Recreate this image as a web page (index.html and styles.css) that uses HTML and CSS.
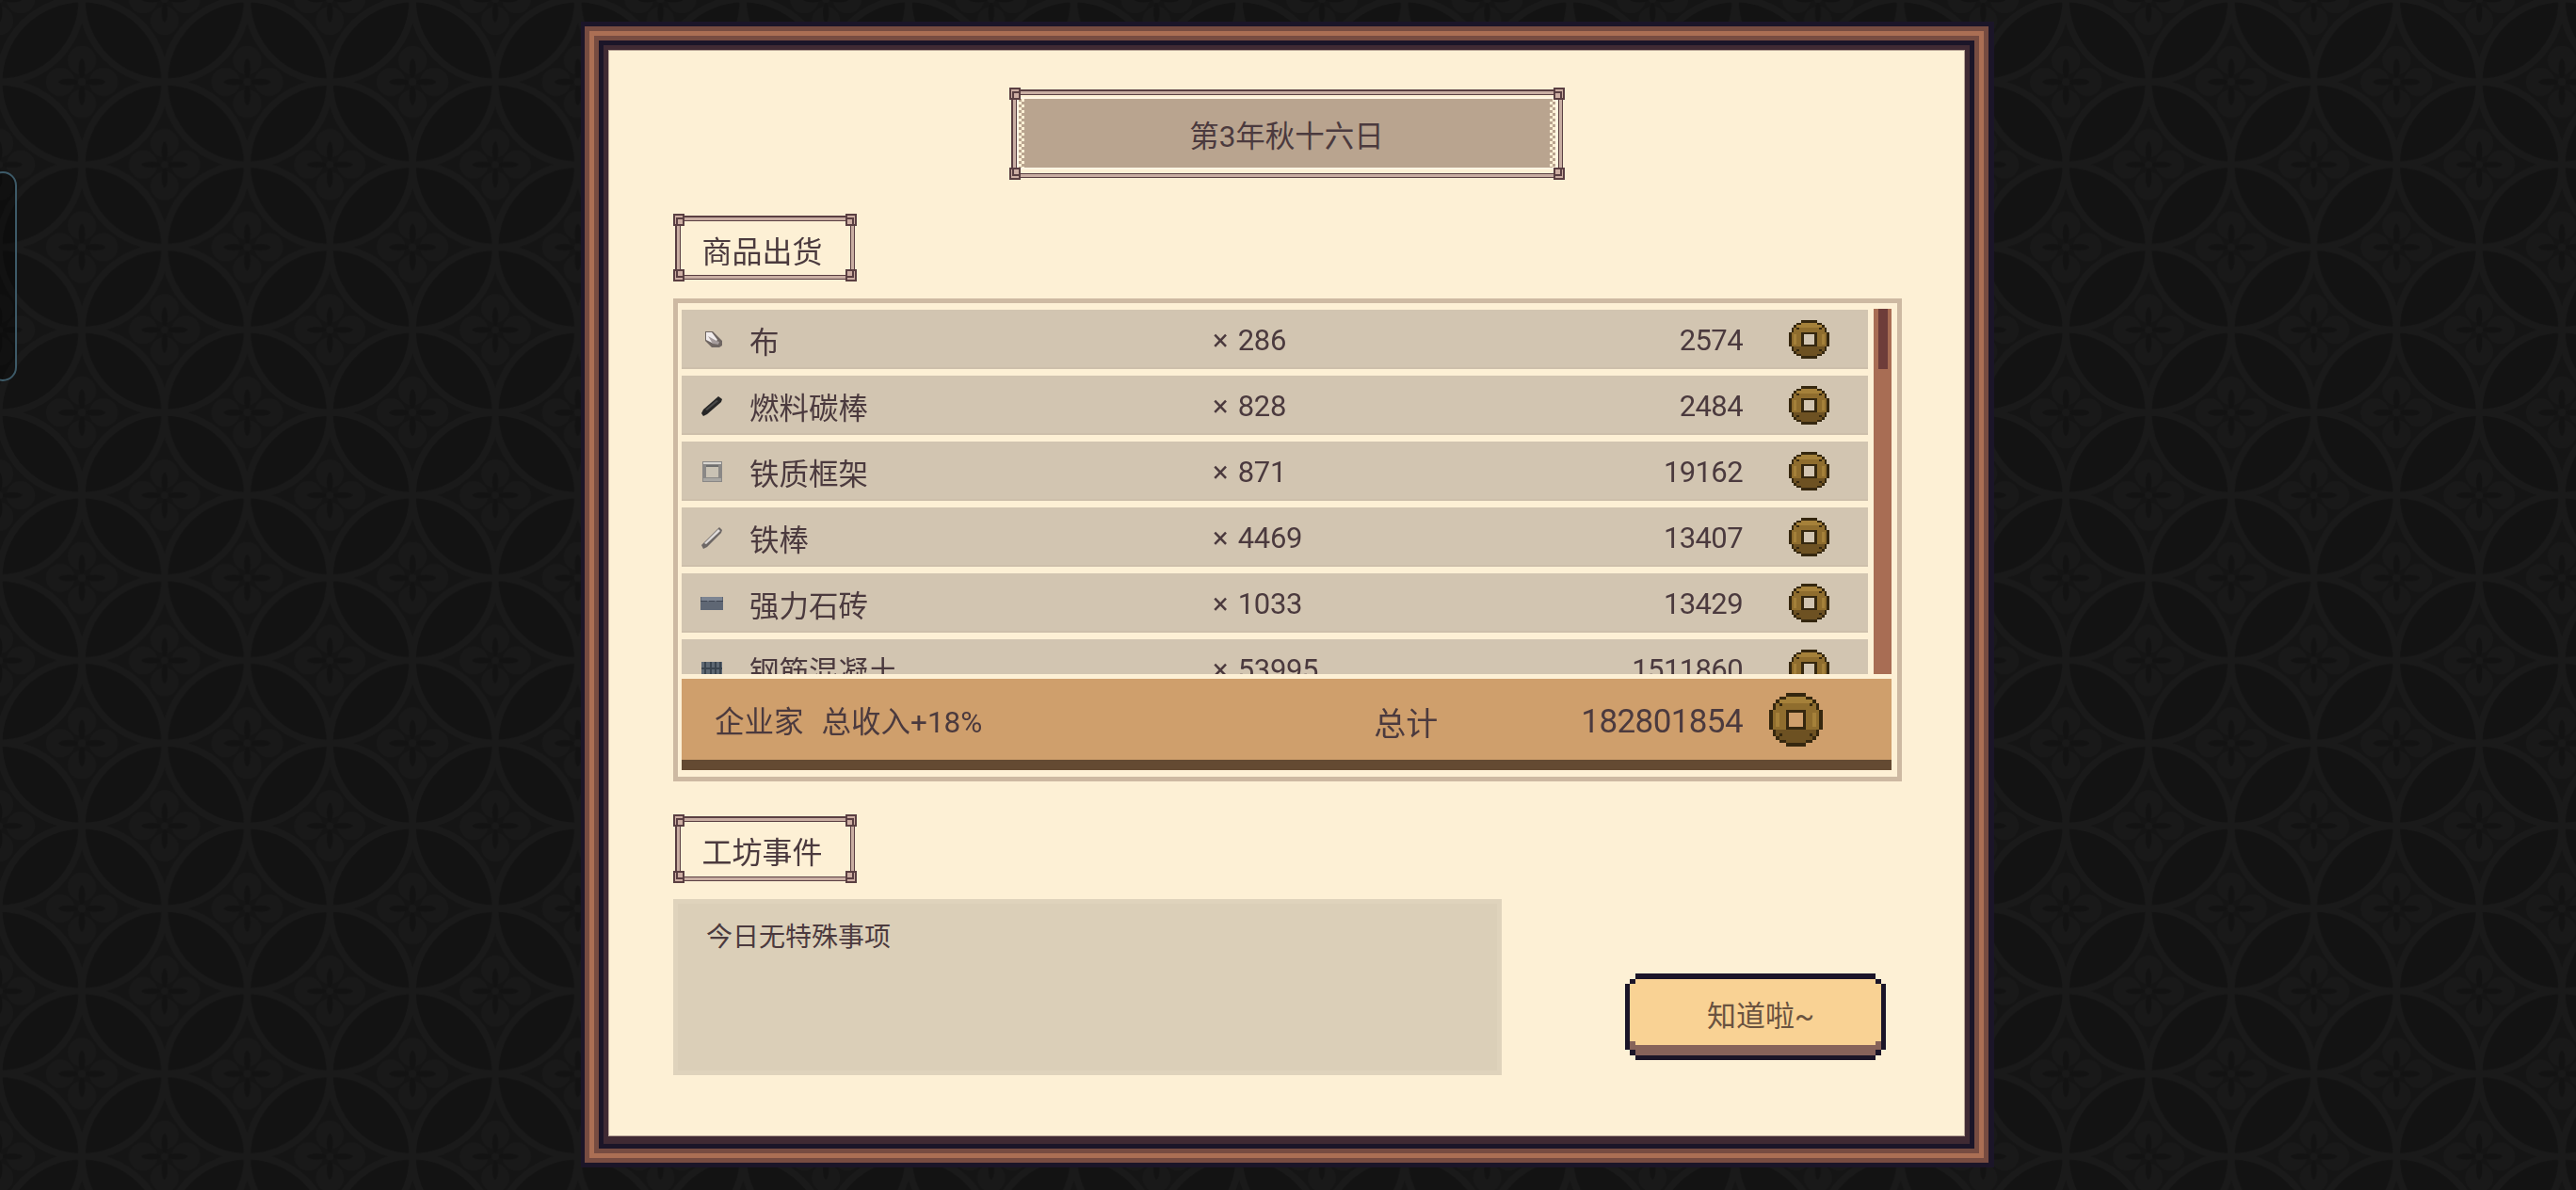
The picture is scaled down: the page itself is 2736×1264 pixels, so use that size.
FILE: index.html
```html
<!DOCTYPE html>
<html lang="zh">
<head>
<meta charset="utf-8">
<title>第3年秋十六日</title>
<link rel="stylesheet" href="styles.css">
</head>
<body>
<svg class="defs" width="0" height="0" aria-hidden="true">
  <defs>
    <g id="rosette">
      <path class="bg-star" d="M0,-88 A88 88 0 0 0 88,0 A88 88 0 0 0 0,88 A88 88 0 0 0 -88,0 A88 88 0 0 0 0,-88 Z"/>
      <circle class="bg-lobe" cx="0" cy="-23" r="15"/>
      <circle class="bg-lobe" cx="0" cy="23" r="15"/>
      <circle class="bg-lobe" cx="-23" cy="0" r="15"/>
      <circle class="bg-lobe" cx="23" cy="0" r="15"/>
      <ellipse class="bg-petal" cx="0" cy="-14" rx="3.5" ry="11"/>
      <ellipse class="bg-petal" cx="0" cy="14" rx="3.5" ry="11"/>
      <ellipse class="bg-petal" cx="-14" cy="0" rx="11" ry="3.5"/>
      <ellipse class="bg-petal" cx="14" cy="0" rx="11" ry="3.5"/>
      <circle class="bg-lobe" cx="0" cy="0" r="4"/>
    </g>
    <pattern id="shippo" width="175.6" height="175.6" patternUnits="userSpaceOnUse" patternTransform="translate(-1 -1)">
      <rect width="176" height="176" class="bg-base"/>
      <use href="#rosette" x="88" y="88"/>
      <use href="#rosette" x="0" y="0"/>
      <use href="#rosette" x="176" y="0"/>
      <use href="#rosette" x="0" y="176"/>
      <use href="#rosette" x="176" y="176"/>
      <circle class="bg-ring" cx="88" cy="88" r="88"/>
      <circle class="bg-ring" cx="0" cy="0" r="88"/>
      <circle class="bg-ring" cx="176" cy="0" r="88"/>
      <circle class="bg-ring" cx="0" cy="176" r="88"/>
      <circle class="bg-ring" cx="176" cy="176" r="88"/>
    </pattern>
    <symbol id="coin" viewBox="0 0 16 16" preserveAspectRatio="none">
      <g shape-rendering="crispEdges">
        <path fill="#35270f" fill-rule="evenodd" d="M5 0h6v1h2v1h1v1h1v2h1v6h-1v2h-1v1h-1v1h-2v1H5v-1H3v-1H2v-1H1v-2H0V5h1V3h1V2h1V1h2z M6 6v4h4V6z"/>
        <path fill="#8f6d2e" fill-rule="evenodd" d="M5 1h6v1h2v1h1v2h1v6h-1v2h-1v1h-2v1H5v-1H3v-1H2v-2H1V5h1V3h1V2h2z M6 6v4h4V6z"/>
        <path fill="#a5813a" d="M5 1h6v1h2v1H3V2h2z M2 6h1v4H2z M13 6h1v4h-1z"/>
        <path fill="#6d5122" d="M2 11h12v2h-1v1h-2v1H5v-1H3v-1H2z"/>
        <path fill="#35270f" d="M5 5h6v1H5z M5 10h6v1H5z M5 6h1v4H5z M10 6h1v4h-1z M3 3h1v1H3z M12 3h1v1h-1z M3 12h1v1H3z M12 12h1v1h-1z"/>
      </g>
    </symbol>
  </defs>
</svg>
<svg class="backdrop" width="2736" height="1264" aria-hidden="true"><rect width="2736" height="1264" fill="url(#shippo)"/></svg>
<div class="edge-tab"></div>

<main class="frame">
  <header class="date-row">
    <div class="ornate date">
      <i class="cn tl"></i><i class="cn tr"></i><i class="cn bl"></i><i class="cn br"></i>
      <div class="date-fill">第3年秋十六日</div>
    </div>
  </header>

  <h2 class="ornate section-title">
    <i class="cn tl"></i><i class="cn tr"></i><i class="cn bl"></i><i class="cn br"></i>
    商品出货
  </h2>

  <section class="ledger">
    <div class="scroll">
      <div class="rows">
        <div class="row">
          <svg class="item" viewBox="0 0 24 24"><path fill="#6f6662" d="M5 3h8l10 10v5l-3 2h-8L5 13z"/><path fill="#f1ecec" d="M6 4h6l6 8-4 4-8-4z"/><path fill="#a59c9c" d="M8 8l9 5 3 1-1 3-6-1z"/></svg>
          <span class="name">布</span><span class="qty">× 286</span><span class="amount">2574</span>
          <svg class="coin"><use href="#coin"/></svg>
        </div>
        <div class="row">
          <svg class="item" viewBox="0 0 24 24"><path fill="#262626" d="M19 2l4 3-1 3L7 21l-4 2-2-3 2-4z"/><path fill="#4a4a4a" d="M17 6l2 1L7 17l-2-1z"/></svg>
          <span class="name">燃料碳棒</span><span class="qty">× 828</span><span class="amount">2484</span>
          <svg class="coin"><use href="#coin"/></svg>
        </div>
        <div class="row">
          <svg class="item" viewBox="0 0 24 24"><path fill="#8a8886" d="M2 1h21v22H2z"/><path fill="#d8d5d0" d="M3 2h19v2H3z"/><path fill="#c9c2b4" d="M6 5h13v13H6z"/><path fill="#6e6e6e" d="M6 5h13v2H6z"/><path fill="#a9a7a3" d="M3 19h19v3H3z"/></svg>
          <span class="name">铁质框架</span><span class="qty">× 871</span><span class="amount">19162</span>
          <svg class="coin"><use href="#coin"/></svg>
        </div>
        <div class="row">
          <svg class="item" viewBox="0 0 24 24"><path fill="#6d6765" d="M20 1l3 3-1 3L7 22l-4 2-2-4z"/><path fill="#dedad8" d="M19 3l2 2L6 19l-2-1z"/></svg>
          <span class="name">铁棒</span><span class="qty">× 4469</span><span class="amount">13407</span>
          <svg class="coin"><use href="#coin"/></svg>
        </div>
        <div class="row">
          <svg class="item" viewBox="0 0 24 24"><path fill="#5f6774" d="M0 5h24v14H0z"/><path fill="#7d8592" d="M1 5h22v4H1z"/><path fill="#3f4653" d="M0 9h7v1H0z M9 9h6v1H9z M17 9h7v1h-7z"/></svg>
          <span class="name">强力石砖</span><span class="qty">× 1033</span><span class="amount">13429</span>
          <svg class="coin"><use href="#coin"/></svg>
        </div>
        <div class="row">
          <svg class="item" viewBox="0 0 24 24"><path fill="#5e6872" d="M1 4h22v20H1z"/><path fill="#3a444e" d="M4 4h2v20H4z M10 4h2v20h-2z M15 4h2v20h-2z M20 4h2v20h-2z M1 10h22v2H1z"/></svg>
          <span class="name">钢筋混凝土</span><span class="qty">× 53995</span><span class="amount">1511860</span>
          <svg class="coin"><use href="#coin"/></svg>
        </div>
      </div>
      <div class="scrollbar"><div class="thumb"></div></div>
    </div>
    <footer class="total">
      <span class="perk">企业家<span class="perk-gain">总收入+18%</span></span>
      <span class="total-label">总计</span>
      <span class="total-amount">182801854</span>
      <svg class="coin-big"><use href="#coin"/></svg>
    </footer>
  </section>

  <h2 class="ornate section-title events-title">
    <i class="cn tl"></i><i class="cn tr"></i><i class="cn bl"></i><i class="cn br"></i>
    工坊事件
  </h2>

  <div class="bottom">
    <div class="events">今日无特殊事项</div>
    <button class="ok" type="button">知道啦~</button>
  </div>
</main>
</body>
</html>
```

FILE: styles.css
```css
* { box-sizing: border-box; }

html, body { margin: 0; height: 100%; }

body {
  height: 1264px;
  overflow: hidden;
  background: #131313;
  display: flex;
  justify-content: center;
  align-items: flex-start;
  padding: 54px 3px 0 0;
  font-family: Roboto, "Noto Sans CJK SC", sans-serif;
  font-size: 31.5px;
  color: #4b3a3e;
}

.defs { position: absolute; }
.backdrop { position: fixed; left: 0; top: 0; z-index: -2; display: block; }
.bg-base { fill: #131313; }
.bg-star { fill: #151515; }
.bg-lobe { fill: #191919; }
.bg-petal { fill: #131313; }
.bg-ring { fill: none; stroke: #1a1a1a; stroke-width: 7; }

.edge-tab {
  position: fixed;
  left: -12px;
  top: 182px;
  width: 30px;
  height: 223px;
  border: 2px solid #3d5a68;
  border-radius: 18px;
  background: rgba(0, 0, 0, .3);
}

/* wooden frame */
.frame {
  position: relative;
  width: 1439px;
  height: 1152px;
  flex: none;
  background: #fdf0d5;
  padding: 39px 68px 0;
  box-shadow: 0 0 0 1px #b9a597;
}
.frame::before {
  content: "";
  position: absolute;
  inset: 0 0 -3px 0;
  z-index: -1;
  background: #402a33;
  box-shadow:
    0 0 0 6px #402a33,
    0 0 0 11px #1b1528,
    0 0 0 16px #774c41,
    0 0 0 21px #ab6f54,
    0 0 0 26px #774c41,
    1px 0 0 31px #1b1528;
}

/* ornate label frame */
.ornate { position: relative; margin: 0; }
.ornate::before {
  content: "";
  position: absolute;
  inset: 2px;
  border: 1px solid #5a3f42;
  border-top-width: 2px;
  border-left-width: 2px;
  box-shadow: inset 0 0 0 3px #c9aea3, inset 0 0 0 4px #5a3f42;
  pointer-events: none;
}
.cn {
  position: absolute;
  width: 12px;
  height: 13px;
  background: #cdaea3;
  border: 2px solid #5a3f42;
  z-index: 1;
}
.cn::after {
  content: "";
  position: absolute;
  width: 5px;
  height: 5px;
  border: 1px solid #5a3f42;
}
.tl { left: 0; top: 0; }
.tr { right: 0; top: 0; }
.bl { left: 0; bottom: 0; }
.br { right: 0; bottom: 0; }
.tl::after { right: 0; bottom: 0; border-width: 2px 0 0 2px; }
.tr::after { left: 0; bottom: 0; border-width: 2px 2px 0 0; }
.bl::after { right: 0; top: 0; border-width: 0 0 2px 2px; }
.br::after { left: 0; top: 0; border-width: 0 2px 2px 0; }

.date-row { display: flex; justify-content: center; }
.date { width: 590px; height: 98px; padding: 12px 10px 13px; }
.date-fill {
  height: 100%;
  display: flex;
  align-items: center;
  justify-content: center;
  padding-top: 1px;
  background:
    repeating-conic-gradient(#fdf0d5 0 25%, transparent 0 50%) 0 0 / 6px 6px repeat-y,
    repeating-conic-gradient(#fdf0d5 0 25%, transparent 0 50%) 100% 0 / 6px 6px repeat-y,
    #b9a48f;
  background-size: 6px 6px, 6px 6px, auto;
  color: #4b3a3e;
  outline: 2px solid #fff6e4;
}

.section-title {
  width: 195px;
  height: 72px;
  margin-top: 36px;
  display: flex;
  align-items: center;
  justify-content: center;
  padding: 3px 6px 0 0;
  font-size: 32px;
  font-weight: 400;
}
.events-title { margin-top: 35px; height: 73px; }

/* ledger */
.ledger {
  width: 1305px;
  height: 513px;
  margin-top: 18px;
  border: 5px solid #cdb9a2;
  padding: 6px 6px 7px 4px;
}
.scroll { display: flex; gap: 6px; height: 388px; overflow: hidden; }
.rows {
  flex: 1;
  display: flex;
  flex-direction: column;
  gap: 7px;
  padding-top: 1px;
  overflow: hidden;
}
.row {
  flex: none;
  height: 63px;
  display: flex;
  align-items: center;
  padding-left: 20px;
  background: #d2c5b1;
  box-shadow: inset 0 -2px 0 #cdbfab;
}
.item { width: 24px; height: 24px; flex: none; margin-right: 28px; }
.name { width: 492px; flex: none; }
.qty { flex: 1; padding-top: 1px; font-size: 31px; word-spacing: 3px; letter-spacing: -.3px; }
.amount { padding-top: 1px; font-size: 31px; letter-spacing: -.6px; }
.coin { width: 43px; height: 41px; flex: none; margin: 0 41px 0 49px; display: block; }
.scrollbar { width: 19px; flex: none; background: #a86d54; padding: 0 4px 0 5px; }
.thumb { height: 64px; background: #6e3d3a; }

.total {
  height: 97px;
  margin-top: 5px;
  display: flex;
  align-items: center;
  padding-left: 35px;
  background: #cf9f6c;
  border-bottom: 11px solid #644a32;
}
.perk { margin-right: auto; }
.perk-gain { margin-left: 19px; }
.total-label { font-size: 34px; margin-right: 152px; padding-top: 4px; }
.total-amount { font-size: 35px; letter-spacing: -.6px; padding-top: 4px; }
.coin-big { width: 57px; height: 57px; flex: none; margin: 0 73px 0 28px; display: block; }

/* bottom row */
.bottom {
  display: flex;
  justify-content: space-between;
  align-items: flex-end;
  margin-top: 17px;
  padding-right: 15px;
}
.events {
  width: 880px;
  height: 187px;
  padding: 13px 30px;
  font-size: 28px;
  background: #dbcfb8;
  border: 5px solid #dfd3bc;
}
.ok {
  position: relative;
  width: 277px;
  height: 92px;
  margin-bottom: 16px;
  border: 0;
  padding: 0 0 7px 11px;
  font: inherit;
  font-size: 31px;
  color: #6a5340;
  background: linear-gradient(#1b1528 0 6px, #f9d294 6px 76px, #87635a 76px 87px, #1b1528 87px);
  box-shadow: inset 5px 0 0 #1b1528, inset -5px 0 0 #1b1528;
  clip-path: polygon(
    11px 0, calc(100% - 11px) 0, calc(100% - 11px) 6px, calc(100% - 5px) 6px, calc(100% - 5px) 11px, 100% 11px,
    100% 81px, calc(100% - 5px) 81px, calc(100% - 5px) 87px, calc(100% - 11px) 87px, calc(100% - 11px) 100%,
    11px 100%, 11px 87px, 5px 87px, 5px 81px, 0 81px, 0 11px, 5px 11px, 5px 6px, 11px 6px);
}
.ok::before {
  content: "";
  position: absolute;
  inset: 0;
  background:
    linear-gradient(#1b1528, #1b1528) 5px 6px / 6px 5px no-repeat,
    linear-gradient(#1b1528, #1b1528) calc(100% - 5px) 6px / 6px 5px no-repeat,
    linear-gradient(#1b1528, #1b1528) 5px 81px / 6px 6px no-repeat,
    linear-gradient(#1b1528, #1b1528) calc(100% - 5px) 81px / 6px 6px no-repeat,
    linear-gradient(#87635a, #87635a) 5px 72px / 6px 9px no-repeat,
    linear-gradient(#87635a, #87635a) calc(100% - 5px) 72px / 6px 9px no-repeat;
}
```
